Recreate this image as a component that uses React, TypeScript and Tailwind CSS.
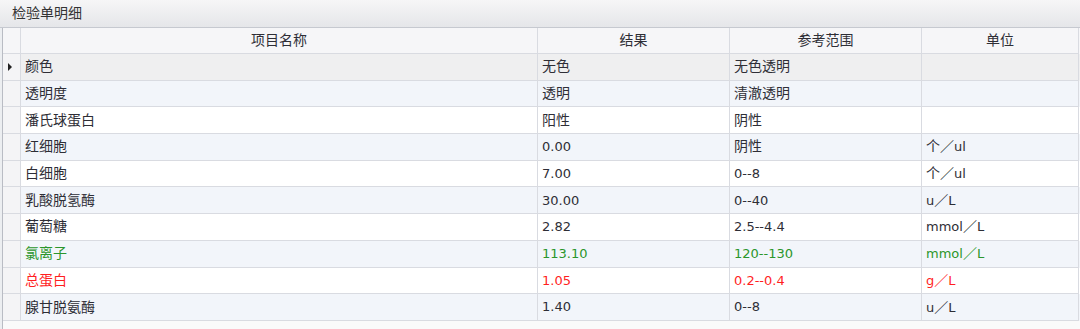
type Row = {
  name: string
  result: string
  range: string
  unit: string
  tone?: "green" | "red"
}

const rows: Row[] = [
  { name: "颜色", result: "无色", range: "无色透明", unit: "" },
  { name: "透明度", result: "透明", range: "清澈透明", unit: "" },
  { name: "潘氏球蛋白", result: "阳性", range: "阴性", unit: "" },
  { name: "红细胞", result: "0.00", range: "阴性", unit: "个／ul" },
  { name: "白细胞", result: "7.00", range: "0--8", unit: "个／ul" },
  { name: "乳酸脱氢酶", result: "30.00", range: "0--40", unit: "u／L" },
  { name: "葡萄糖", result: "2.82", range: "2.5--4.4", unit: "mmol／L" },
  { name: "氯离子", result: "113.10", range: "120--130", unit: "mmol／L", tone: "green" },
  { name: "总蛋白", result: "1.05", range: "0.2--0.4", unit: "g／L", tone: "red" },
  { name: "腺甘脱氨酶", result: "1.40", range: "0--8", unit: "u／L" },
]

const cols = "grid grid-cols-[18px_517px_192px_192px_157px]"
const cell = "border-r border-b border-[#d9dbe1] flex items-center"

// chinese glyphs sit a bit larger than the latin ones in the original grid
function Text({ value }: { value: string }) {
  const parts = value.match(/[\u3000-\u9fff\uff00-\uffef]+|[^\u3000-\u9fff\uff00-\uffef]+/g) ?? []
  return (
    <span>
      {parts.map((p, i) =>
        /[\u3000-\u9fff\uff00-\uffef]/.test(p) ? (
          <span key={i} className="text-[14px]">{p}</span>
        ) : (
          <span key={i}>{p}</span>
        )
      )}
    </span>
  )
}

export default function App() {
  return (
    <div
      className="w-[1080px] h-[329px] overflow-hidden flex flex-col bg-[#eceef1] text-[13px] text-[#2e2e36]"
      style={{ fontFamily: '"DejaVu Sans", "Noto Sans CJK SC", sans-serif' }}
    >
      <div className="h-[28px] shrink-0 flex items-center px-[12px] bg-gradient-to-b from-[#f6f6f7] to-[#e5e6e9] border-b border-[#c6c9d0] text-[14px] text-[#333]">
        检验单明细
      </div>

      <div className="flex-1 ml-[2px] border-l border-[#b9bcc4] bg-[#fafafa]">
        <div className={`${cols} h-[26px] bg-[#f6f6f8] text-[14px]`}>
          <div className={cell} />
          <div className={`${cell} justify-center`}>项目名称</div>
          <div className={`${cell} justify-center`}>结果</div>
          <div className={`${cell} justify-center`}>参考范围</div>
          <div className={`${cell} justify-center`}>单位</div>
        </div>

        {rows.map((row, i) => {
          const bg = i === 0 ? "bg-[#efeff0]" : i % 2 === 1 ? "bg-[#f2f5fa]" : "bg-white"
          const color =
            row.tone === "green" ? "text-[#2b962b]" : row.tone === "red" ? "text-[#ff1f1f]" : ""
          return (
            <div key={row.name} className={`${cols} h-[26.7px] ${bg} ${color}`}>
              <div className={`${cell} justify-center bg-[#f4f4f6]`}>
                {i === 0 && (
                  <span className="w-0 h-0 border-y-[4px] border-y-transparent border-l-[4px] border-l-[#222] -ml-[3px]" />
                )}
              </div>
              <div className={`${cell} pl-[4px]`}><Text value={row.name} /></div>
              <div className={`${cell} pl-[4px]`}><Text value={row.result} /></div>
              <div className={`${cell} pl-[4px]`}><Text value={row.range} /></div>
              <div className={`${cell} pl-[4px]`}><Text value={row.unit} /></div>
            </div>
          )
        })}
      </div>
    </div>
  )
}
